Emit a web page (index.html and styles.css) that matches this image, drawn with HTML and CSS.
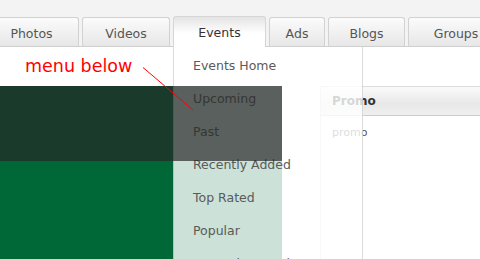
FILE: index.html
```html
<!DOCTYPE html>
<html lang="en">
<head>
  <meta charset="UTF-8" />
  <title>Events menu</title>
  <link rel="stylesheet" href="styles.css">
</head>
<body>
  <header class="tabbar">
    <ul class="tabs">
      <li class="tab tab-photos">Photos</li>
      <li class="tab tab-videos">Videos</li>
      <li class="tab tab-events active">Events
        <ul class="dropdown">
          <li>Events Home</li>
          <li>Upcoming</li>
          <li>Past</li>
          <li>Recently Added</li>
          <li>Top Rated</li>
          <li>Popular</li>
          <li>Most Discussed</li>
        </ul>
      </li>
      <li class="tab tab-ads">Ads</li>
      <li class="tab tab-blogs">Blogs</li>
      <li class="tab tab-groups">Groups</li>
    </ul>
  </header>

  <main class="page">
    <section class="main-col">
      <p class="note">menu below</p>
      <div class="feature">
        <div class="feature-band"></div>
      </div>
    </section>

    <aside class="sidebar">
      <div class="box">
        <h3 class="box-head">Promo</h3>
        <p class="box-body">promo</p>
      </div>
    </aside>
  </main>

  <!-- annotation arrow -->
  <svg class="pointer" width="480" height="259" viewBox="0 0 480 259">
    <line x1="143" y1="67.5" x2="193" y2="110" stroke="#ff0000" stroke-width="1" />
  </svg>
</body>
</html>
```

FILE: styles.css
```css
* {
  box-sizing: border-box;
  margin: 0;
  padding: 0;
}

body {
  font-family: "DejaVu Sans", Verdana, sans-serif;
  background: #fff;
  color: #555;
  overflow: hidden;
  height: 259px;
}

ul {
  list-style: none;
}

/* tab strip */
.tabbar {
  height: 47px;
  background: #f3f3f3;
  border-bottom: 1px solid #cfcfcf;
  padding-top: 17px;
}

.tabs {
  display: flex;
  gap: 3px;
  margin-left: -16px;
  white-space: nowrap;
}

.tab {
  position: relative;
  height: 29px;
  line-height: 31px;
  font-size: 12.5px;
  text-align: center;
  color: #555;
  border: 1px solid #d2d2d2;
  border-bottom: none;
  border-radius: 3px 3px 0 0;
  background: linear-gradient(#fbfbfb, #e7e7e7);
  flex-shrink: 0;
}

.tab-photos { width: 95px; }
.tab-videos { width: 88px; }
.tab-events { width: 93px; }
.tab-ads { width: 56px; }
.tab-blogs { width: 77px; }
.tab-groups { width: 96px; }

.tab.active {
  height: 31px;
  margin-top: -1px;
  line-height: 32px;
  color: #333;
  background: linear-gradient(#e4e4e4, #fff 55%);
  border-color: #d6d6d6;
}

/* dropdown that ends up under the content */
.dropdown {
  position: absolute;
  top: 30px;
  left: -1px;
  width: 190px;
  height: 240px;
  z-index: 5;
  padding-top: 3px;
  text-align: left;
  background: rgba(255, 255, 255, 0.8);
  border-left: 1px solid rgba(0, 0, 0, 0.14);
  border-right: 1px solid rgba(0, 0, 0, 0.14);
}

.dropdown li {
  height: 33px;
  line-height: 32px;
  padding-left: 19px;
  font-size: 12.5px;
  color: #5a5a5a;
}

/* page body */
.page {
  display: flex;
}

.main-col {
  width: 282px;
  flex-shrink: 0;
}

.note {
  height: 39px;
  padding: 9px 0 0 25px;
  font-size: 17.5px;
  line-height: 20px;
  color: #ff0000;
}

.feature {
  height: 180px;
  background: #006837;
}

.feature-band {
  position: relative;
  z-index: 6;
  height: 75px;
  background: rgba(38, 38, 38, 0.69);
}

.sidebar {
  margin-left: 38px;
  padding-top: 39px;
}

.box {
  width: 200px;
  border: 1px solid #dcdcdc;
  height: 200px;
}

.box-head {
  height: 29px;
  line-height: 29px;
  padding-left: 11px;
  font-size: 12px;
  color: #333;
  background: linear-gradient(#fafafa, #e8e8e8 60%, #efefef);
  border-bottom: 1px solid #cdcdcd;
}

.box-body {
  padding: 10px 0 0 11px;
  font-size: 11px;
  line-height: 14px;
  color: #555;
}

.pointer {
  position: absolute;
  top: 0;
  left: 0;
  z-index: 10;
  pointer-events: none;
}
```
